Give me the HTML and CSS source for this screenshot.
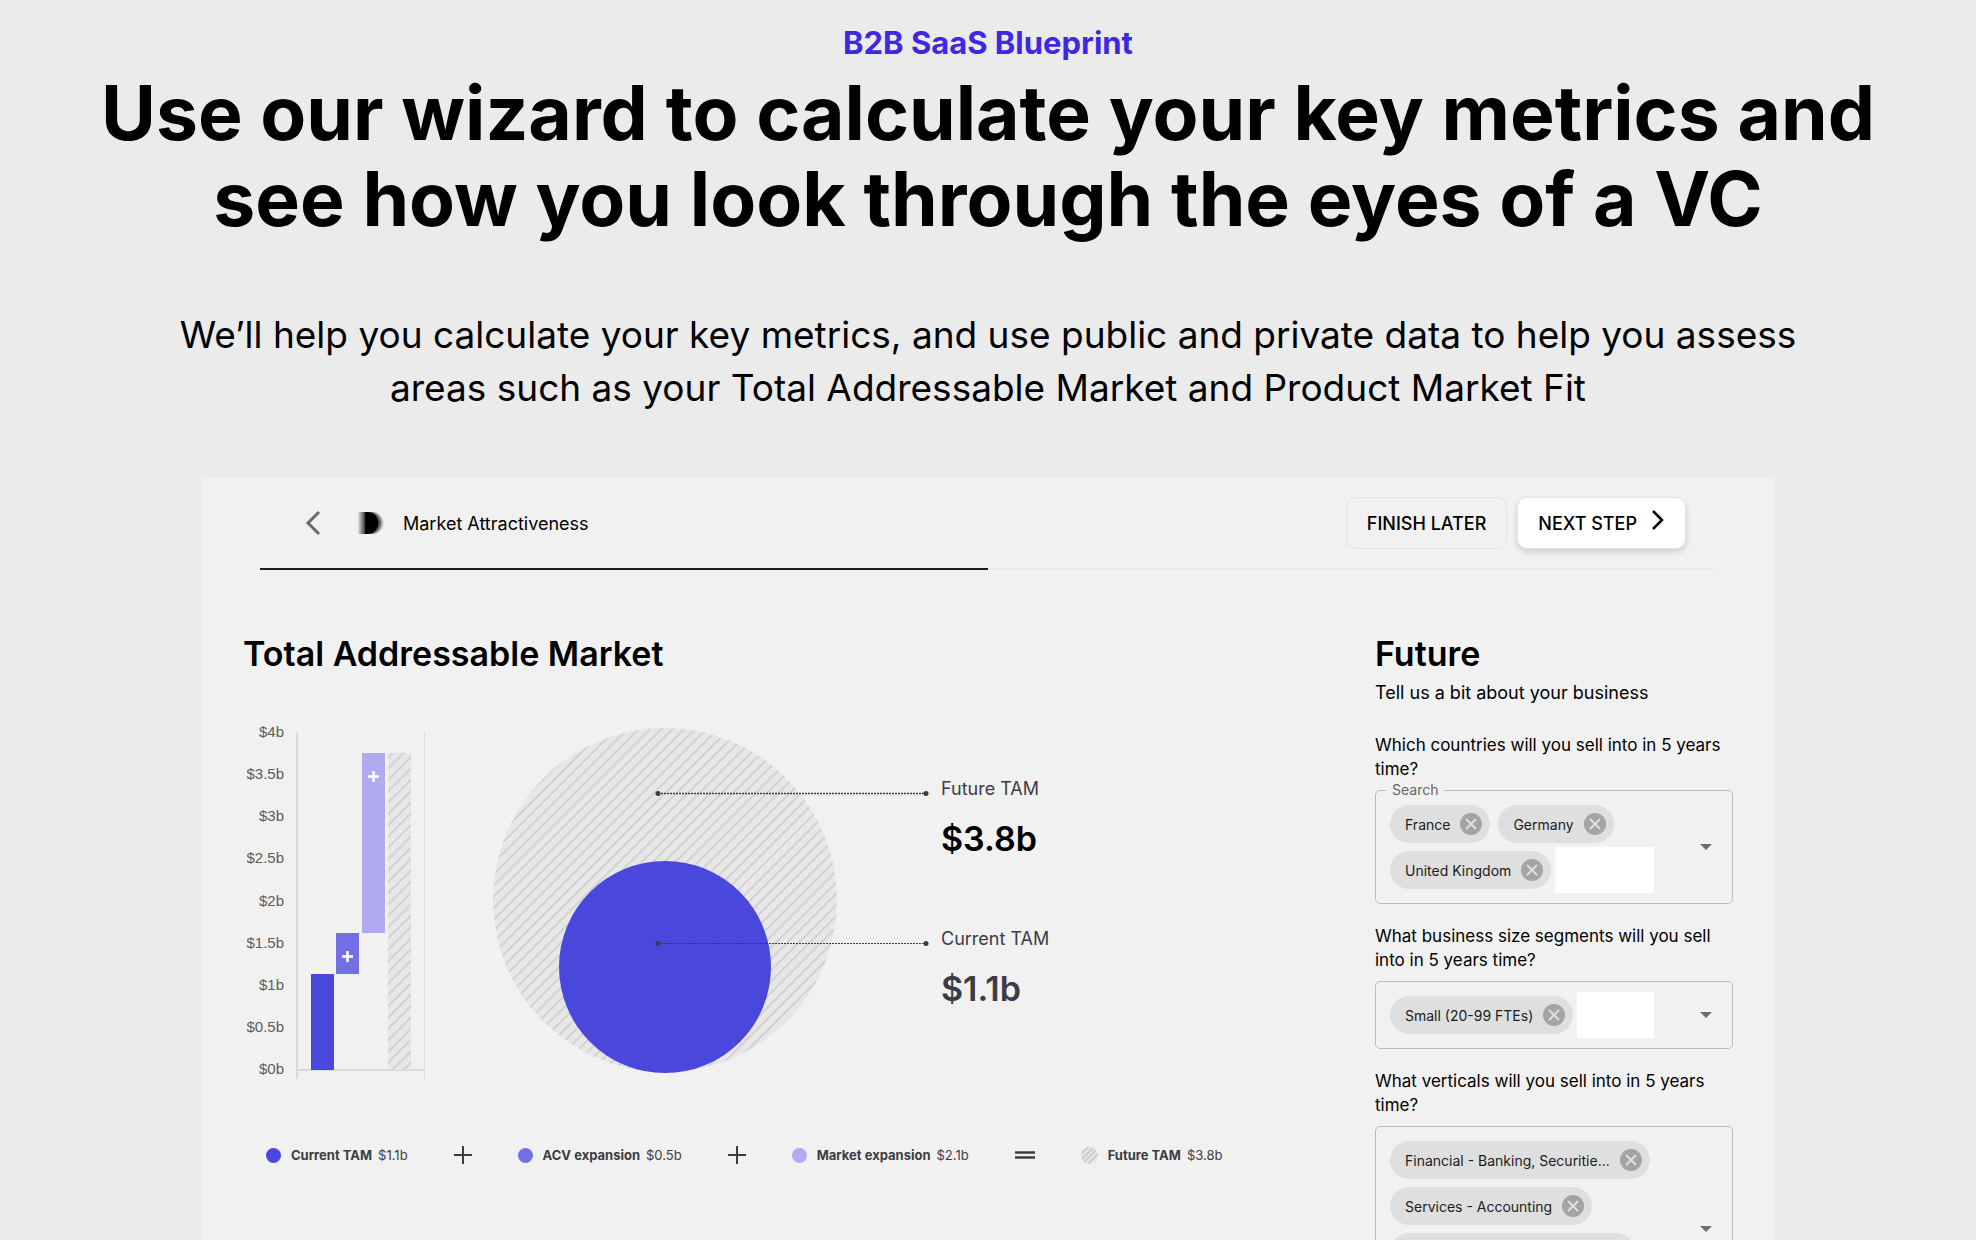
FILE: index.html
```html
<!DOCTYPE html>
<html lang="en">
<head>
    <meta charset="UTF-8">
    <meta name="viewport" content="width=device-width, initial-scale=1.0">
    <title>B2B SaaS Blueprint</title>
    <link rel="stylesheet" href="styles.css">
</head>
<body>
    <header class="hero">
        <p class="hero-eyebrow">B2B SaaS Blueprint</p>
        <h1>Use our wizard to calculate your key metrics and see how you look through the eyes of a VC</h1>
        <p class="hero-text">We’ll help you calculate your key metrics, and use public and private data to help you assess areas such as your Total Addressable Market and Product Market Fit</p>
    </header>

    <main class="wizard">
        <div class="wizard-header">
            <button class="back" type="button" aria-label="Back">
                <svg width="16" height="26" viewBox="0 0 16 26"><path d="M14 2L3 13L14 24" fill="none" stroke="#6b6b6b" stroke-width="3"/></svg>
            </button>
            <svg class="step-icon" width="28" height="24" viewBox="0 0 28 24">
                <defs>
                    <linearGradient id="fade">
                        <stop offset="0" stop-color="#e4e4e4"/>
                        <stop offset="1" stop-color="#222"/>
                    </linearGradient>
                </defs>
                <rect x="1" y="1" width="8" height="22" fill="url(#fade)"/>
                <path d="M9 1h7a11 11 0 0 1 0 22h-7z" fill="#d8d8d8"/>
                <path d="M9 1h5.500a11 11 0 0 1 0 22h-5.500z" fill="#aaa"/>
                <path d="M9 1h4a11 11 0 0 1 0 22h-4z" fill="#666"/>
                <path d="M8 1h2.500a11 11 0 0 1 0 22h-2.500z" fill="#000"/>
            </svg>
            <span class="step-name">Market Attractiveness</span>
            <button class="btn" type="button">FINISH LATER</button>
            <button class="btn btn-primary" type="button">NEXT STEP
                <svg width="14" height="26" viewBox="0 0 14 26"><path d="M2 1L11 10L2 19" fill="none" stroke="#000" stroke-width="2.500"/></svg>
            </button>
        </div>
        <div class="progress"><div class="progress-bar"></div></div>

        <div class="wizard-body">
            <section class="market">
                <h2>Total Addressable Market</h2>
                <div class="charts">
                    <svg class="bars" width="192" height="372" viewBox="0 0 192 372">
                        <defs>
                            <pattern id="stripes" width="8" height="8" patternUnits="userSpaceOnUse" patternTransform="rotate(45)">
                                <rect width="8" height="8" fill="#e7e7e7"/>
                                <rect width="2" height="8" fill="#d2d2d3"/>
                            </pattern>
                        </defs>
                        <g class="ticks">
                            <text x="41" y="17">$4b</text>
                            <text x="41" y="59">$3.5b</text>
                            <text x="41" y="101">$3b</text>
                            <text x="41" y="143">$2.5b</text>
                            <text x="41" y="186">$2b</text>
                            <text x="41" y="228">$1.5b</text>
                            <text x="41" y="270">$1b</text>
                            <text x="41" y="312">$0.5b</text>
                            <text x="41" y="354">$0b</text>
                        </g>
                        <path d="M54 12V359M54 350H181" stroke="#d2d2d2" stroke-width="1.500"/>
                        <path d="M181.500 12V359" stroke="#dedede"/>
                        <rect x="68" y="254" width="23" height="96" fill="#4a48dc"/>
                        <rect x="93" y="213" width="23" height="41" fill="#7370e3"/>
                        <rect x="119" y="33" width="23" height="180" fill="#b0abee"/>
                        <rect x="145" y="33" width="23" height="317" fill="url(#stripes)"/>
                        <path d="M99 236.500h11M104.500 231v11M125 56.500h11M130.500 51v11" stroke="#fff" stroke-width="2.500"/>
                    </svg>
                    <svg class="circles" width="442" height="372" viewBox="0 0 442 372">
                        <circle cx="177" cy="180" r="172" fill="url(#stripes)"/>
                        <circle cx="177" cy="247" r="106" fill="#4a48dc"/>
                        <g stroke="#3c3c43" stroke-dasharray="2 1">
                            <path d="M170 73.500H438" stroke-width="1.500"/>
                            <path d="M170 223.500H438"/>
                        </g>
                        <g fill="#3c3c43">
                            <circle cx="170" cy="73.500" r="2.500"/>
                            <circle cx="438" cy="73.500" r="2.500"/>
                            <circle cx="170" cy="223.500" r="2.500"/>
                            <circle cx="438" cy="223.500" r="2.500"/>
                        </g>
                    </svg>
                    <dl class="totals">
                        <div>
                            <dt>Future TAM</dt>
                            <dd class="future">$3.8b</dd>
                        </div>
                        <div>
                            <dt>Current TAM</dt>
                            <dd>$1.1b</dd>
                        </div>
                    </dl>
                </div>
                <div class="legend">
                    <div class="legend-item"><i class="dot current"></i><b>Current TAM</b> $1.1b</div>
                    <svg width="18" height="18" viewBox="0 0 18 18"><path d="M0 9H18M9 0V18" stroke="#3c3c43" stroke-width="2"/></svg>
                    <div class="legend-item"><i class="dot acv"></i><b>ACV expansion</b> $0.5b</div>
                    <svg width="18" height="18" viewBox="0 0 18 18"><path d="M0 9H18M9 0V18" stroke="#3c3c43" stroke-width="2"/></svg>
                    <div class="legend-item"><i class="dot expansion"></i><b>Market expansion</b> $2.1b</div>
                    <svg width="20" height="18" viewBox="0 0 20 18"><path d="M0 6.500H20M0 11.500H20" stroke="#3c3c43" stroke-width="2.500"/></svg>
                    <div class="legend-item"><i class="dot total"></i><b>Future TAM</b> $3.8b</div>
                </div>
            </section>

            <form class="future-form">
                <h2>Future</h2>
                <p class="intro">Tell us a bit about your business</p>

                <label class="question" for="countries">Which countries will you sell into in 5 years time?</label>
                <div class="field">
                    <span class="field-label">Search</span>
                    <div class="chips">
                        <span class="chip">France<button type="button" aria-label="Remove France"></button></span>
                        <span class="chip">Germany<button type="button" aria-label="Remove Germany"></button></span>
                        <span class="chip">United Kingdom<button type="button" aria-label="Remove United Kingdom"></button></span>
                        <input id="countries" type="text">
                    </div>
                    <button class="open" type="button" aria-label="Open countries"></button>
                </div>

                <label class="question" for="segments">What business size segments will you sell into in 5 years time?</label>
                <div class="field">
                    <div class="chips">
                        <span class="chip">Small (20-99 FTEs)<button type="button" aria-label="Remove Small"></button></span>
                        <input id="segments" type="text">
                    </div>
                    <button class="open" type="button" aria-label="Open segments"></button>
                </div>

                <label class="question" for="verticals">What verticals will you sell into in 5 years time?</label>
                <div class="field">
                    <div class="chips">
                        <span class="chip">Financial - Banking, Securitie...<button type="button" aria-label="Remove Financial"></button></span>
                        <span class="chip">Services - Accounting<button type="button" aria-label="Remove Accounting"></button></span>
                        <span class="chip">Services - Architecture, En...<button type="button" aria-label="Remove Architecture"></button></span>
                        <span class="chip">Services - Legal<button type="button" aria-label="Remove Legal"></button></span>
                        <input id="verticals" type="text">
                    </div>
                    <button class="open" type="button" aria-label="Open verticals"></button>
                </div>
            </form>
        </div>
    </main>

    <script>
        const cross = '<svg width="22" height="22" viewBox="0 0 22 22"><circle cx="11" cy="11" r="11" fill="#a4a4a4"/><path d="M6 6L16 16M16 6L6 16" stroke="#dfdfdf" stroke-width="2"/></svg>';
        const arrow = '<svg width="12" height="6" viewBox="0 0 12 6"><path d="M0 0H12L6 6Z" fill="#6e6e6e"/></svg>';

        document.querySelectorAll('.chip button').forEach(button => {
            button.innerHTML = cross;
            button.addEventListener('click', () => button.parentElement.remove());
        });
        document.querySelectorAll('.open').forEach(button => {
            button.innerHTML = arrow;
        });
    </script>
</body>
</html>
```
FILE: styles.css
```css
* {
    box-sizing: border-box;
}

body {
    margin: 0;
    background-color: #ebebeb;
    color: #000;
    font-family: Inter, "Liberation Sans", sans-serif;
}

h1, h2, p, dl, dd {
    margin: 0;
}

button {
    padding: 0;
    border: none;
    background: none;
    font-family: inherit;
    cursor: pointer;
}

svg {
    display: block;
    flex: none;
}

/* Hero */
.hero {
    padding: 24px 80px 0;
    text-align: center;
}

.hero-eyebrow {
    color: #3d28e3;
    font-size: 31px;
    font-weight: 700;
    line-height: 38px;
}

.hero h1 {
    margin-top: 8px;
    font-size: 75px;
    font-weight: 700;
    line-height: 86px;
}

.hero-text {
    max-width: 1680px;
    margin: 66px auto 0;
    font-size: 37px;
    line-height: 53px;
}

/* Wizard panel */
.wizard {
    max-width: 1572px;
    margin: 64px auto 0;
    background-color: #f1f1f1;
}

.wizard-header {
    display: flex;
    align-items: center;
    margin: 0 58px;
    padding: 19px 30px 19px 45px;
}

.step-icon {
    margin: 0 18px 0 36px;
}

.step-name {
    flex: 1;
    font-size: 18px;
}

.btn {
    display: flex;
    align-items: center;
    gap: 14px;
    height: 52px;
    padding: 0 20px;
    border: 1px solid #e2e2e2;
    border-radius: 10px;
    color: #000;
    font-size: 18px;
    font-weight: 500;
}

.btn-primary {
    margin-left: 10px;
    background-color: #fff;
    box-shadow: 0 3px 6px rgba(0, 0, 0, 0.15);
}

.progress {
    height: 2px;
    margin: 0 58px;
    background-color: #ececec;
}

.progress-bar {
    width: 50%;
    height: 2px;
    background-color: #1c1c1c;
}

.wizard-body {
    display: grid;
    grid-template-columns: 1fr 358px;
    gap: 40px;
    padding: 61px 41px 40px;
}

h2 {
    font-size: 34px;
    font-weight: 600;
    line-height: 46px;
}

/* Charts */
.charts {
    display: flex;
    margin-top: 43px;
}

.bars, .circles {
    overflow: visible;
}

.circles {
    margin-left: 53px;
}

.ticks {
    fill: #5c5c5c;
    font-family: "Liberation Sans", sans-serif;
    font-size: 15px;
    text-anchor: end;
}

.totals {
    display: flex;
    flex-direction: column;
    gap: 64px;
    margin: 56px 0 0 11px;
    color: #3c3c43;
}

.totals dt {
    font-size: 18px;
    line-height: 26px;
}

.totals dd {
    margin-top: 14px;
    font-size: 34px;
    font-weight: 600;
    line-height: 46px;
}

.totals .future {
    color: #000;
}

.legend {
    display: flex;
    align-items: center;
    gap: 46px;
    margin: 54px 0 0 23px;
    color: #3c3c43;
    font-size: 13px;
}

.legend-item {
    display: flex;
    align-items: center;
    gap: 6px;
    white-space: nowrap;
}

.dot {
    width: 15px;
    height: 15px;
    margin-right: 4px;
    border-radius: 50%;
}

.dot.current {
    background-color: #4a48dc;
}

.dot.acv {
    background-color: #7370e3;
}

.dot.expansion {
    background-color: #b0abee;
}

.dot.total {
    width: 17px;
    height: 17px;
    background: repeating-linear-gradient(135deg, #cfcfcf 0 2px, #e7e7e7 2px 4px);
}

/* Form */
.intro {
    margin-bottom: 24px;
    font-size: 18px;
    line-height: 32px;
}

.question {
    display: block;
    font-size: 17px;
    line-height: 24px;
}

.field {
    position: relative;
    display: flex;
    align-items: center;
    margin: 9px 0 20px;
    padding: 10px;
    border: 1px solid #bdbdbd;
    border-radius: 5px;
}

.field-label {
    position: absolute;
    top: -10px;
    left: 10px;
    padding: 0 6px;
    background-color: #f1f1f1;
    color: #666;
    font-size: 14px;
    line-height: 18px;
}

.chips {
    display: flex;
    flex: 1;
    flex-wrap: wrap;
    min-width: 0;
}

.chip {
    display: flex;
    align-items: center;
    gap: 10px;
    height: 38px;
    margin: 4px;
    padding: 0 8px 0 15px;
    border-radius: 19px;
    background-color: #dfdfdf;
    color: #1c1c1c;
    font-size: 14px;
    white-space: nowrap;
}

.chips input {
    flex: 1;
    width: 0;
    min-width: 40px;
    height: 46px;
    padding: 0 8px;
    border: none;
    background-color: #fff;
    font-size: 16px;
}

.open {
    display: flex;
    justify-content: center;
    width: 32px;
    padding: 8px 0;
    margin-left: 36px;
}
```
